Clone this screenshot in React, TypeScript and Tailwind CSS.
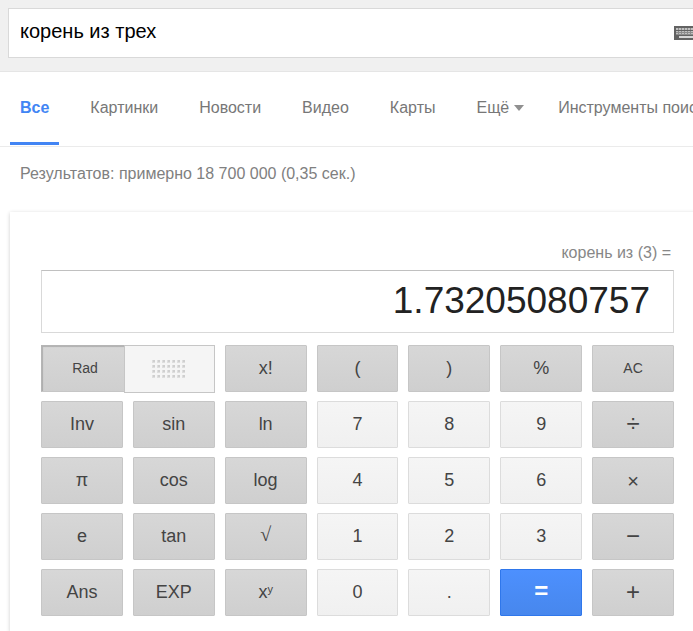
import React from "react";

type Tone = "gray" | "light" | "blue";

interface Key {
  label: React.ReactNode;
  name?: string;
  tone: Tone;
  text?: string;
}

const tones: Record<Tone, string> = {
  gray: "border-[#c6c6c6] bg-linear-to-b from-[#d7d7d7] to-[#cfcfcf] text-[#444]",
  light: "border-[#dcdcdc] bg-linear-to-b from-[#f5f5f5] to-[#f0f0f0] text-[#444]",
  blue: "border-[#2f77eb] bg-linear-to-b from-[#4d90fe] to-[#4787ed] text-white",
};

const gray = (label: React.ReactNode, name?: string, text?: string): Key => ({ label, name, text, tone: "gray" });
const light = (label: string): Key => ({ label, tone: "light" });
const operator = "pb-[2px] text-2xl leading-none";

const keys: Key[] = [
  gray("x!"), gray("("), gray(")"), gray("%"), gray("AC", "AC", "text-sm leading-none pb-px"),
  gray("Inv"), gray("sin"), gray("ln"), light("7"), light("8"), light("9"), gray("÷", "разделить", operator),
  gray("π"), gray("cos"), gray("log"), light("4"), light("5"), light("6"), gray("×", "умножить", "text-xl leading-none"),
  gray("e"), gray("tan"), gray("√", "корень", "pb-[6px] text-xl leading-none font-['Liberation_Serif',serif]"), light("1"), light("2"), light("3"), gray("−", "минус", operator),
  gray("Ans"), gray("EXP"),
  gray(<span>x<sup className="text-[11px]">y</sup></span>, "x в степени y"),
  light("0"), light("."),
  { label: "=", name: "равно", tone: "blue", text: "pb-[3px] text-2xl leading-none font-bold" },
  gray("+", "плюс", operator),
];

const tabs = ["Картинки", "Новости", "Видео", "Карты"];

function KeyboardIcon() {
  return (
    <svg width="28" height="14" viewBox="0 0 28 14" className="max-w-none" shapeRendering="crispEdges" aria-hidden="true">
      <rect width="28" height="14" fill="#636363" />
      {[2, 5, 7].map((y) =>
        Array.from({ length: 8 }, (_, i) => (
          <g key={`${y}-${i}`}>
            <rect x={2 + i * 3} y={y} width="3" height="2" fill="#8c8c8c" />
            <rect x={2 + i * 3} y={y} width="2" height={y === 2 ? 2 : 1} fill="#c0c0c0" />
          </g>
        ))
      )}
      <rect x="5" y="10" width="18" height="2" fill="#d6d6d6" />
    </svg>
  );
}

function DotGrid() {
  return (
    <svg width="34" height="18" viewBox="0 0 34 18" shapeRendering="crispEdges" aria-hidden="true">
      {[0, 5, 10, 15].map((y) =>
        Array.from({ length: 7 }, (_, i) => (
          <g key={`${y}-${i}`}>
            <rect x={i * 5} y={y} width="3" height="3" fill="#dedede" />
            <rect x={i * 5 + 1} y={y} width="2" height="2" fill="#cfcfcf" />
          </g>
        ))
      )}
    </svg>
  );
}

export default function App() {
  return (
    <div className="min-h-screen overflow-hidden bg-white font-['Liberation_Sans',Arial,sans-serif] text-base text-[#777]">
      <header className="border-b border-[#e5e5e5] bg-[#f0f0f0] pt-2 pb-[13px] pl-2">
        <form className="flex h-[50px] items-start border border-r-0 border-[#d9d9d9] bg-white">
          <input
            type="text"
            aria-label="Поиск"
            defaultValue="корень из трех"
            className="h-11 min-w-0 flex-1 bg-transparent pl-[11px] text-xl text-black outline-none"
          />
          <button type="button" aria-label="Экранная клавиатура" className="mt-[17px] w-[19px] overflow-hidden">
            <KeyboardIcon />
          </button>
        </form>
      </header>

      <nav className="flex h-[75px] items-stretch gap-[21px] overflow-hidden border-b border-[#ebebeb] pl-[10px] whitespace-nowrap">
        <a href="#all" className="mb-px flex items-center border-b-3 border-[#4285f4] px-[10px] pt-[2px] font-bold text-[#4285f4]">
          Все
        </a>
        {tabs.map((tab) => (
          <a key={tab} href="#tab" className="flex items-center px-[10px] pb-[3px]">
            {tab}
          </a>
        ))}
        <button type="button" className="flex items-center gap-[5px] px-[10px] pb-[3px]">
          Ещё
          <svg width="10" height="6" viewBox="0 0 10 6" aria-hidden="true">
            <path d="M0 0h10L5 6z" fill="#909090" />
          </svg>
        </button>
        <button type="button" className="pb-[3px] pl-[3px]">
          Инструменты поиска
        </button>
      </nav>

      <p className="px-5 pt-[15px] pb-[26px] text-[#808080]">Результатов: примерно 18 700 000 (0,35 сек.)</p>

      <main className="-mr-2 ml-[10px] bg-white pt-[29px] pr-[27px] pb-4 pl-[31px] shadow-[0_1px_4px_rgba(0,0,0,0.2)]">
        <p className="pr-[3px] text-right text-[#878787]">корень из (3) =</p>
        <output className="mt-[5px] flex h-[63px] items-center justify-end border border-[#d9d9d9] border-t-[#c0c0c0] pr-[23px] pb-[2px] text-[37px] leading-none text-[#222]">
          1.73205080757
        </output>
        <div className="mt-3 grid auto-rows-[47px] grid-cols-7 gap-x-[10px] gap-y-[9px]">
          <div className="col-span-2 grid h-12 grid-cols-[83px_1fr]">
            <button
              type="button"
              className="h-[47px] border border-r-0 border-[#b5b5b5] border-b-[#c6c6c6] bg-linear-to-b from-[#d7d7d7] to-[#cfcfcf] pb-px pl-1 text-sm text-[#444] shadow-[inset_1px_1px_1px_rgba(0,0,0,0.18)]"
            >
              Rad
            </button>
            <button
              type="button"
              aria-label="Deg"
              className="flex items-center justify-center border border-[#c6c6c6] bg-[#f5f5f5]"
            >
              <DotGrid />
            </button>
          </div>
          {keys.map((key, index) => (
            <button
              key={index}
              type="button"
              aria-label={key.name}
              className={`flex items-center justify-center rounded-[1px] border ${tones[key.tone]} ${key.text ?? "pb-px text-lg leading-none"}`}
            >
              {key.label}
            </button>
          ))}
        </div>
      </main>
    </div>
  );
}
